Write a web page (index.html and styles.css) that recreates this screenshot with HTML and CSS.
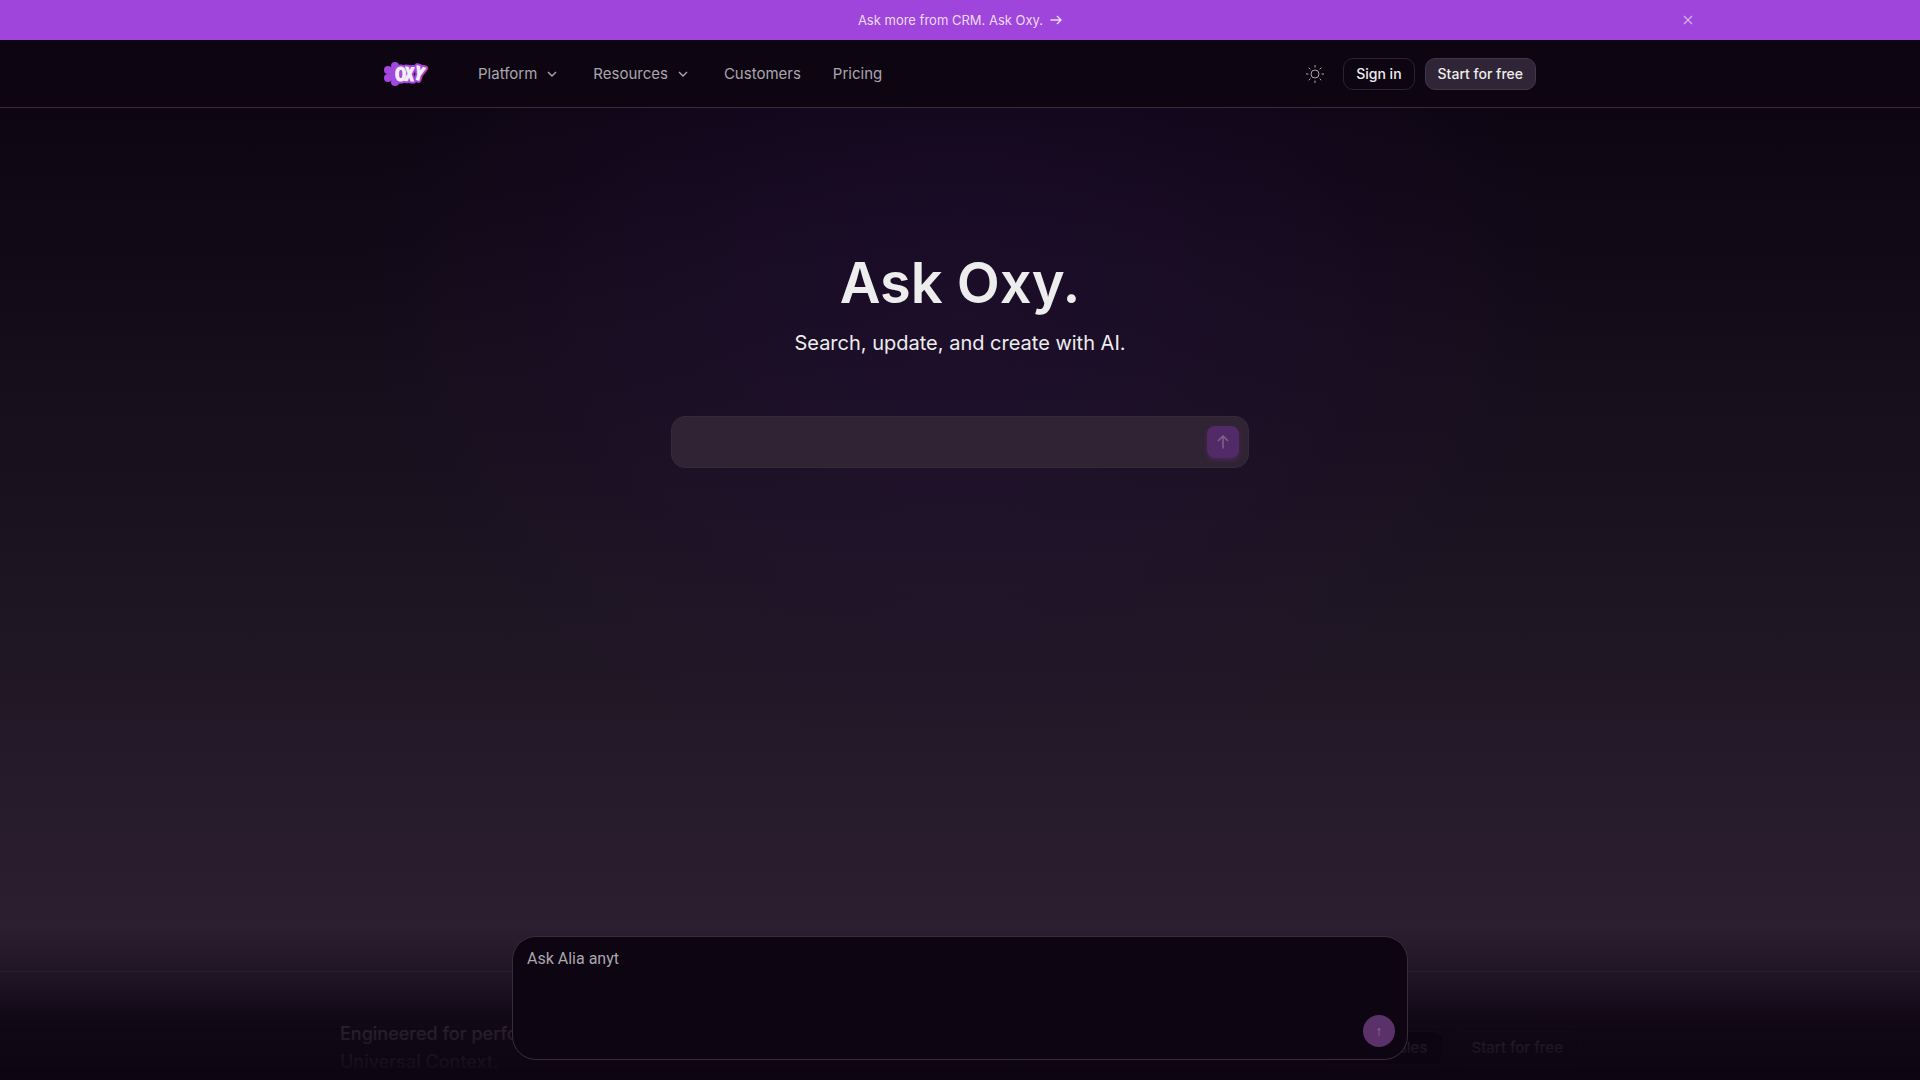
FILE: index.html
```html
<!DOCTYPE html>
<html lang="en">
<head>
  <meta charset="UTF-8" />
  <meta name="viewport" content="width=device-width, initial-scale=1" />
  <title>Oxy</title>
  <link rel="stylesheet" href="styles.css">
</head>
<body>

  <div class="banner">
    <a href="#" class="banner-link">
      Ask more from CRM. Ask Oxy.
      <svg width="12" height="12" viewBox="0 0 12 12"><path d="M0.5 6h10.5M7 2l4 4-4 4" /></svg>
    </a>
    <button type="button" class="banner-close" aria-label="Dismiss">
      <svg width="10" height="10" viewBox="0 0 10 10"><path d="M1 1l8 8M9 1l-8 8" /></svg>
    </button>
  </div>

  <header class="header">
    <div class="header-inner">
      <a href="#" class="logo" aria-label="Oxy home">
        <svg width="48" height="26" viewBox="0 0 48 26">
          <g class="logo-flower">
            <circle cx="11" cy="13" r="7" />
            <circle cx="11" cy="5" r="4" />
            <circle cx="4" cy="9" r="4" />
            <circle cx="4" cy="17" r="4" />
            <circle cx="11" cy="21" r="4" />
            <circle cx="17" cy="18" r="4" />
            <circle cx="17" cy="8" r="4" />
          </g>
          <g class="logo-outline">
            <text x="11" y="20">O</text>
            <text x="21" y="20" transform="rotate(4 27 13)">X</text>
            <text x="31" y="20" transform="rotate(16 38 13)">Y</text>
          </g>
          <g class="logo-word">
            <text x="11" y="20">O</text>
            <text x="21" y="20" transform="rotate(4 27 13)">X</text>
            <text x="31" y="20" transform="rotate(16 38 13)">Y</text>
          </g>
        </svg>
      </a>

      <nav class="nav">
        <button type="button" class="nav-item nav-menu">Platform
          <svg width="10" height="6" viewBox="0 0 10 6"><path d="M1 1l4 4 4-4" /></svg>
        </button>
        <button type="button" class="nav-item nav-menu">Resources
          <svg width="10" height="6" viewBox="0 0 10 6"><path d="M1 1l4 4 4-4" /></svg>
        </button>
        <a href="#" class="nav-item">Customers</a>
        <a href="#" class="nav-item">Pricing</a>
      </nav>

      <div class="actions">
        <button type="button" class="theme-btn" aria-label="Toggle theme">
          <svg width="18" height="18" viewBox="0 0 18 18">
            <circle cx="9" cy="9" r="4" />
            <path d="M9 0v2.500M9 15.500V18M0 9h2.500M15.500 9H18M2.700 2.700l1.700 1.700M13.600 13.600l1.700 1.700M2.700 15.300l1.700-1.700M13.600 4.400l1.700-1.700" />
          </svg>
        </button>
        <a href="#" class="btn">Sign in</a>
        <a href="#" class="btn btn-filled">Start for free</a>
      </div>
    </div>
  </header>

  <main>
    <section class="hero">
      <h1>Ask Oxy.</h1>
      <p class="subtitle">Search, update, and create with AI.</p>
      <form class="ask-form">
        <input type="text" class="ask-input" aria-label="Ask Oxy" />
        <button type="submit" class="ask-btn" aria-label="Send" disabled>
          <svg width="12" height="14" viewBox="0 0 12 14"><path d="M6 13.500V1M1 6l5-5 5 5" /></svg>
        </button>
      </form>
    </section>

    <section class="cta">
      <div class="cta-inner">
        <h2>Engineered for performance.<br>Universal Context.</h2>
        <div class="cta-actions">
          <a href="#" class="cta-btn cta-dark">Talk to sales</a>
          <a href="#" class="cta-btn">Start for free</a>
        </div>
      </div>
    </section>
  </main>

  <div class="dock">
    <form class="composer">
      <textarea aria-label="Ask Alia" placeholder="Ask Alia anyt"></textarea>
      <button type="submit" class="composer-btn" aria-label="Send message" disabled>↑</button>
    </form>
  </div>

</body>
</html>
```
FILE: styles.css
```css
* {
  box-sizing: border-box;
}
html {
  overflow: hidden;
}
body {
  margin: 0;
  height: 100vh;
  overflow: hidden;
  font-family: Inter, "Liberation Sans", sans-serif;
  background-color: #0d0512;
  color: #ededed;
}
a {
  color: inherit;
  text-decoration: none;
}
button {
  padding: 0;
  border: none;
  background: none;
  color: inherit;
  font-family: inherit;
  cursor: pointer;
}
svg {
  display: block;
  fill: none;
  stroke: currentColor;
}

/* announcement */
.banner {
  position: relative;
  display: flex;
  justify-content: center;
  align-items: center;
  height: 40px;
  background-color: #9f45db;
}
.banner-link {
  display: flex;
  align-items: center;
  gap: 7px;
  font-size: 13px;
  color: #ecdcf6;
}
.banner-link svg {
  stroke-width: 1.4;
}
.banner-close {
  position: absolute;
  right: 227px;
  color: #cfb0d8;
}
.banner-close svg {
  stroke-width: 1.4;
}

/* header */
.header {
  height: 68px;
  border-bottom: 1px solid #382c3e;
}
.header-inner {
  display: flex;
  align-items: center;
  max-width: 1200px;
  height: 100%;
  margin: 0 auto;
  padding: 0 24px;
}
.logo-flower {
  fill: #a347df;
  stroke: none;
}
.logo-outline,
.logo-word {
  font-family: "Liberation Sans Narrow", "Open Sans Condensed", Roboto, sans-serif;
  font-size: 19px;
  font-weight: 900;
  stroke-linejoin: round;
}
.logo-outline {
  stroke: #a347df;
  stroke-width: 5px;
}
.logo-word {
  fill: #f4f0f6;
  stroke: #f4f0f6;
  stroke-width: 1px;
}
.nav {
  display: flex;
  gap: 32px;
  margin-left: 46px;
}
.nav-item {
  display: flex;
  align-items: center;
  gap: 10px;
  font-size: 15px;
  color: #aaa6ac;
}
.nav-menu {
  padding-right: 4px;
}
.nav-menu svg {
  stroke-width: 1.4;
}
.actions {
  display: flex;
  align-items: center;
  gap: 10px;
  margin-left: auto;
}
.theme-btn {
  margin-right: 9px;
  color: #aaa6ac;
}
.btn {
  padding: 0 12px;
  border: 1px solid #2b2331;
  border-radius: 10px;
  font-size: 14px;
  font-weight: 500;
  line-height: 30px;
}
.btn-filled {
  background-color: #302536;
  border-color: #42364a;
}

/* hero */
.hero {
  display: flex;
  flex-direction: column;
  align-items: center;
  min-height: calc(80vh - 1px);
  padding: 140px 24px 0;
  background:
    radial-gradient(ellipse 620px 460px at 50% 200px, rgba(46, 18, 76, 0.34), rgba(46, 18, 76, 0.2) 50%, rgba(46, 18, 76, 0)),
    linear-gradient(#0d0512, #1d1522 57%, #2e2032);
}
h1 {
  margin: 0;
  font-size: 56px;
  font-weight: 600;
  line-height: 70px;
}
.subtitle {
  margin: 10px 0 0;
  font-size: 20px;
  line-height: 30px;
}
.ask-form {
  display: flex;
  align-items: center;
  width: 100%;
  max-width: 578px;
  margin-top: 58px;
  padding: 9px;
  border: 1px solid #35293a;
  border-radius: 14px;
  background-color: #302434;
}
.ask-input {
  flex: 1;
  border: none;
  outline: none;
  background: none;
  color: inherit;
  font: inherit;
}
.ask-btn {
  display: flex;
  justify-content: center;
  align-items: center;
  width: 32px;
  height: 32px;
  border-radius: 8px;
  background-color: #522a67;
  box-shadow: 0 2px 4px rgba(82, 42, 103, 0.7);
  color: #7f648a;
}
.ask-btn svg {
  stroke-width: 1.5;
}

/* bottom call to action */
.cta {
  border-top: 1px solid #3a2d3f;
  background-color: #2c2134;
}
.cta-inner {
  display: flex;
  justify-content: space-between;
  align-items: center;
  max-width: 1240px;
  margin: 0 auto;
  padding: 48px 0;
}
h2 {
  margin: 0;
  font-size: 18px;
  font-weight: 500;
  line-height: 28px;
}
.cta-actions {
  display: flex;
  gap: 10px;
}
.cta-btn {
  padding: 0 16px;
  border: 1px solid #42364a;
  border-radius: 10px;
  font-size: 15px;
  font-weight: 500;
  line-height: 32px;
}
.cta-dark {
  background-color: #0d0512;
}

/* chat composer that floats over the page */
.dock {
  position: fixed;
  left: 0;
  right: 0;
  bottom: 0;
  padding: 8px 24px 20px;
  background: linear-gradient(rgba(13, 5, 18, 0), rgba(13, 5, 18, 0.4) 30%, rgba(13, 5, 18, 0.86) 60%, #0d0512);
}
.composer {
  display: flex;
  max-width: 896px;
  height: 124px;
  margin: 0 auto;
  padding: 12px;
  border: 1px solid #382d3f;
  border-radius: 24px;
  background-color: #0d0512;
}
.composer textarea {
  flex: 1;
  padding: 0 2px;
  border: none;
  outline: none;
  resize: none;
  background: none;
  color: inherit;
  font-family: Roboto, sans-serif;
  font-size: 16px;
  line-height: 20px;
}
.composer textarea::placeholder {
  color: #aaa6ac;
}
.composer-btn {
  align-self: flex-end;
  width: 32px;
  height: 32px;
  border-radius: 50%;
  background-color: #5b3169;
  color: #8c7096;
  font-family: "Liberation Sans", sans-serif;
  font-size: 14px;
}
```
